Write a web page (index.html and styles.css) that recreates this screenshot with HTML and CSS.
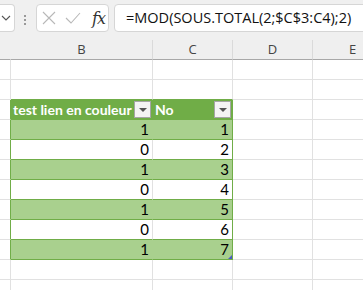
FILE: index.html
```html
<!DOCTYPE html>
<html lang="fr">
<head>
    <meta charset="UTF-8">
    <title>Classeur</title>
    <link rel="stylesheet" href="styles.css">
</head>
<body>
    <div class="toolbar">
        <div class="name-box">
            <svg width="10" height="6" viewBox="0 0 10 6"><path d="M1 1 L5 5 L9 1" fill="none" stroke="#555" stroke-width="1.1"/></svg>
        </div>
        <div class="grip"><span></span><span></span><span></span></div>
        <div class="fx-box">
            <svg width="14" height="14" viewBox="0 0 14 14"><path d="M1 1 L13 13 M13 1 L1 13" stroke="#b8b8b8" stroke-width="1.1"/></svg>
            <svg width="16" height="12" viewBox="0 0 16 12"><path d="M1 6 L6 11 L15 1" fill="none" stroke="#b8b8b8" stroke-width="1.1"/></svg>
            <span class="fx">fx</span>
        </div>
        <div class="formula">=MOD(SOUS.TOTAL(2;$C$3:C4);2)</div>
    </div>

    <div class="sheet">
        <div class="row head">
            <div class="cell"></div>
            <div class="cell">B</div>
            <div class="cell">C</div>
            <div class="cell">D</div>
            <div class="cell">E</div>
        </div>
        <div class="row">
            <div class="cell"></div><div class="cell"></div><div class="cell"></div><div class="cell"></div><div class="cell"></div>
        </div>
        <div class="row before-table">
            <div class="cell"></div><div class="cell top"></div><div class="cell top"></div><div class="cell"></div><div class="cell"></div>
        </div>
        <div class="row table-head">
            <div class="cell edge"></div>
            <div class="cell tb"><span>test lien en couleur</span><span class="filter"></span></div>
            <div class="cell tc"><span>No</span><span class="filter"></span></div>
            <div class="cell"></div><div class="cell"></div>
        </div>
        <div class="row band">
            <div class="cell edge"></div><div class="cell tb">1</div><div class="cell tc">1</div><div class="cell"></div><div class="cell"></div>
        </div>
        <div class="row plain">
            <div class="cell edge"></div><div class="cell tb">0</div><div class="cell tc">2</div><div class="cell"></div><div class="cell"></div>
        </div>
        <div class="row band">
            <div class="cell edge"></div><div class="cell tb">1</div><div class="cell tc">3</div><div class="cell"></div><div class="cell"></div>
        </div>
        <div class="row plain">
            <div class="cell edge"></div><div class="cell tb">0</div><div class="cell tc">4</div><div class="cell"></div><div class="cell"></div>
        </div>
        <div class="row band">
            <div class="cell edge"></div><div class="cell tb">1</div><div class="cell tc">5</div><div class="cell"></div><div class="cell"></div>
        </div>
        <div class="row plain">
            <div class="cell edge"></div><div class="cell tb">0</div><div class="cell tc">6</div><div class="cell"></div><div class="cell"></div>
        </div>
        <div class="row band">
            <div class="cell edge"></div><div class="cell tb">1</div><div class="cell tc">7<span class="handle"></span></div><div class="cell"></div><div class="cell"></div>
        </div>
        <div class="row">
            <div class="cell"></div><div class="cell"></div><div class="cell"></div><div class="cell"></div><div class="cell"></div>
        </div>
        <div class="row">
            <div class="cell"></div><div class="cell"></div><div class="cell"></div><div class="cell"></div><div class="cell"></div>
        </div>
    </div>
</body>
</html>
```

FILE: styles.css
```css
body {
    margin: 0;
    width: 363px;
    height: 290px;
    overflow: hidden;
    background: #fff;
    font-family: 'Open Sans', sans-serif;
}

.toolbar {
    height: 40px;
    background: #f0f0f0;
    display: flex;
    align-items: flex-start;
    padding-top: 4px;
    box-sizing: border-box;
    overflow: hidden;
}

.name-box {
    width: 15px;
    height: 28px;
    background: #fff;
    border: 1px solid #d6d6d6;
    border-left: none;
    border-radius: 0 4px 4px 0;
    box-sizing: border-box;
    display: flex;
    align-items: center;
    justify-content: flex-end;
    padding-right: 3px;
    flex-shrink: 0;
}

.grip {
    width: 3px;
    margin: 11px 9px 0 9px;
    display: flex;
    flex-direction: column;
    gap: 2px;
}

.grip span {
    width: 2px;
    height: 2px;
    background: #999;
}

.fx-box {
    width: 73px;
    height: 28px;
    background: #fff;
    border: 1px solid #d6d6d6;
    border-radius: 4px;
    box-sizing: border-box;
    display: flex;
    align-items: center;
    padding-left: 5px;
    gap: 9px;
    flex-shrink: 0;
}

.fx {
    font-family: 'DejaVu Serif', serif;
    font-style: italic;
    font-size: 16px;
    color: #333;
    margin-left: 2px;
    letter-spacing: -1px;
}

.formula {
    flex: 1;
    height: 28px;
    margin-left: 5px;
    margin-right: -10px;
    background: #fff;
    border: 1px solid #d6d6d6;
    border-radius: 4px;
    box-sizing: border-box;
    padding-left: 11px;
    font-size: 14.5px;
    line-height: 26px;
    color: #111;
    white-space: nowrap;
}

.sheet {
    width: 363px;
    overflow: hidden;
}

.row {
    display: grid;
    grid-template-columns: 11px 142px 80px 80px 80px;
    height: 20px;
}

.cell {
    border-right: 1px solid #e1e1e1;
    border-bottom: 1px solid #e1e1e1;
    box-sizing: border-box;
    font-family: 'Lato', sans-serif;
    font-size: 15px;
    line-height: 19px;
    text-align: right;
    padding-right: 3px;
    color: #000;
    position: relative;
    white-space: nowrap;
}

.head {
    background: #efefef;
}

.head .cell {
    font-family: 'Open Sans', sans-serif;
    font-size: 13px;
    text-align: center;
    padding-right: 0;
    color: #444;
    border-right-color: #dadada;
    border-bottom-color: #a8a8a8;
}

.head .cell:first-child {
    border-right-color: #efefef;
}

.top {
    border-bottom-color: #70ad47;
}

.edge,
.tc {
    border-right-color: #70ad47;
}

.tb,
.tc {
    border-bottom-color: #70ad47;
}

.band .tb,
.band .tc {
    background: #a9d08e;
}

.band .tb {
    border-right-color: #a9d08e;
}

.table-head .tb,
.table-head .tc {
    background: #70ad47;
    color: #fff;
    font-weight: bold;
    font-size: 14px;
    text-align: left;
    padding-left: 2px;
    padding-right: 1px;
    display: flex;
    justify-content: space-between;
    align-items: center;
}

.table-head .tb {
    border-right-color: #70ad47;
}

.filter {
    width: 17px;
    height: 17px;
    background: #f4f4f4;
    border: 1px solid #a6a6a6;
    box-sizing: border-box;
    position: relative;
}

.filter::after {
    content: "";
    position: absolute;
    left: 4px;
    top: 6px;
    border-left: 4px solid transparent;
    border-right: 4px solid transparent;
    border-top: 4px solid #555;
}

.handle {
    position: absolute;
    right: 0;
    bottom: 0;
    width: 0;
    height: 0;
    border-left: 4px solid transparent;
    border-bottom: 4px solid #4a5bc4;
}
```
